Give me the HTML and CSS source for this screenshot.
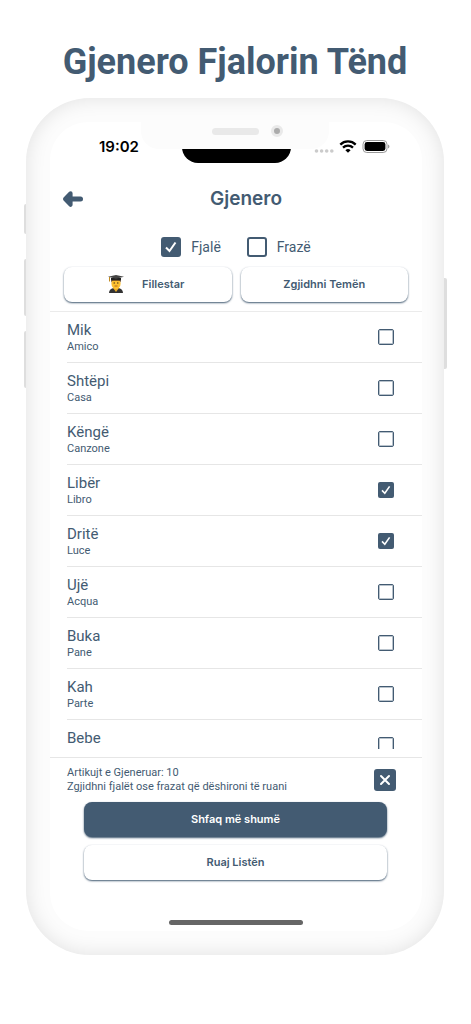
FILE: index.html
```html
<!DOCTYPE html>
<html lang="sq">
<head>
    <meta charset="UTF-8">
    <meta name="viewport" content="width=device-width, initial-scale=1.0">
    <title>Gjenero Fjalorin Tënd</title>
    <link rel="stylesheet" href="styles.css">
</head>
<body>
    <h1>Gjenero Fjalorin Tënd</h1>

    <div class="phone">
        <span class="side-key key-mute"></span>
        <span class="side-key key-up"></span>
        <span class="side-key key-down"></span>
        <span class="side-key key-power"></span>

        <div class="bezel-notch">
            <span class="speaker"></span>
            <span class="camera"></span>
        </div>

        <main class="screen">
            <div class="status-bar">
                <span class="clock">19:02</span>
                <span class="island"></span>
                <div class="status-icons">
                    <svg width="20" height="6" viewBox="0 0 20 6" fill="#cbcbcb">
                        <circle cx="2.5" cy="3" r="1.8"/>
                        <circle cx="7.6" cy="3" r="1.8"/>
                        <circle cx="12.7" cy="3" r="1.8"/>
                        <circle cx="17.8" cy="3" r="1.8"/>
                    </svg>
                    <svg class="wifi" width="18" height="13" viewBox="0 0 18 13" fill="none" stroke="#000" stroke-width="2.3">
                        <path d="M1.3 4.6a11 11 0 0 1 15.4 0"/>
                        <path d="M4 7.7a7.2 7.2 0 0 1 10 0"/>
                        <path d="M9 12.8 6.4 10.200a3.700 3.700 0 0 1 5.200 0z" fill="#000" stroke="none"/>
                    </svg>
                    <svg width="28" height="13" viewBox="0 0 28 13">
                        <rect x="1" y="0.5" width="24" height="12" rx="3.8" fill="#fff" stroke="#999"/>
                        <rect x="2.6" y="2.1" width="20.8" height="8.8" rx="2.4"/>
                        <path d="M26.2 4.6v4c1.6-.7 1.6-3.3 0-4z" fill="#888"/>
                    </svg>
                </div>
            </div>

            <header class="top-bar">
                <button class="back" type="button" aria-label="Kthehu">
                    <svg width="22" height="18" viewBox="0 0 22 18" fill="none" stroke="#435b72" stroke-linecap="round" stroke-linejoin="round">
                        <path d="M8.600 3.200 3 9l5.600 5.800z" fill="#435b72" stroke-width="4"/>
                        <path d="M5 9h13.500" stroke-width="5"/>
                    </svg>
                </button>
                <h2>Gjenero</h2>
            </header>

            <div class="kinds">
                <label><input class="check check-large" type="checkbox" checked>Fjalë</label>
                <label><input class="check check-large" type="checkbox">Frazë</label>
            </div>

            <div class="filters">
                <button class="btn btn-level" type="button">
                    <svg width="18" height="18" viewBox="0 0 18 18">
                        <path d="M2 18c0-3 2-4.500 5-5h4c3 .5 5 2 5 5z" fill="#333"/>
                        <path d="M6 13l3 4 3-4-1-2H7z" fill="#e9a825"/>
                        <ellipse cx="9" cy="8.500" rx="4.600" ry="5.500" fill="#fdc02f"/>
                        <path d="M4.300 7.500V4h9.400v3.500l-1-1.700H5.300z" fill="#5b3a20"/>
                        <path d="M4 3h10v2.500Q9 4 4 5.500z" fill="#222"/>
                        <path d="M9 0l8 1.700-8 2.100-8-2.100z" fill="#444"/>
                        <path d="M2.500 2v4.500" stroke="#c18a22"/>
                        <circle cx="7.200" cy="8" r=".7" fill="#46301a"/>
                        <circle cx="10.800" cy="8" r=".7" fill="#46301a"/>
                        <path d="M7.500 11h3" stroke="#a1501d" stroke-width=".8"/>
                    </svg>
                    <span>Fillestar</span>
                </button>
                <button class="btn" type="button">Zgjidhni Temën</button>
            </div>

            <ul class="words">
                <li><label><span class="word">Mik<small>Amico</small></span><input class="check" type="checkbox"></label></li>
                <li><label><span class="word">Shtëpi<small>Casa</small></span><input class="check" type="checkbox"></label></li>
                <li><label><span class="word">Këngë<small>Canzone</small></span><input class="check" type="checkbox"></label></li>
                <li><label><span class="word">Libër<small>Libro</small></span><input class="check" type="checkbox" checked></label></li>
                <li><label><span class="word">Dritë<small>Luce</small></span><input class="check" type="checkbox" checked></label></li>
                <li><label><span class="word">Ujë<small>Acqua</small></span><input class="check" type="checkbox"></label></li>
                <li><label><span class="word">Buka<small>Pane</small></span><input class="check" type="checkbox"></label></li>
                <li><label><span class="word">Kah<small>Parte</small></span><input class="check" type="checkbox"></label></li>
                <li class="cut"><label><span class="word">Bebe</span><input class="check" type="checkbox"></label></li>
            </ul>

            <footer class="summary">
                <div class="summary-row">
                    <p>Artikujt e Gjeneruar: 10<br>Zgjidhni fjalët ose frazat që dëshironi të ruani</p>
                    <button class="clear" type="button" aria-label="Pastro">
                        <svg width="12" height="12" viewBox="0 0 12 12" stroke="#fff" stroke-width="2" stroke-linecap="round">
                            <path d="M2 2l8 8M10 2l-8 8"/>
                        </svg>
                    </button>
                </div>
                <div class="actions">
                    <button class="btn btn-dark" type="button">Shfaq më shumë</button>
                    <button class="btn" type="button">Ruaj Listën</button>
                </div>
            </footer>

            <div class="home-bar"></div>
        </main>
    </div>
</body>
</html>
```

FILE: styles.css
```css
* {
    margin: 0;
    padding: 0;
    box-sizing: border-box;
}

body {
    font-family: Inter, 'Liberation Sans', sans-serif;
    background: #fff;
    color: #435b72;
    padding: 38px 27px 69px 26px;
}

h1 {
    font-family: Roboto, 'Liberation Sans', sans-serif;
    font-size: 36px;
    font-weight: 700;
    line-height: 48px;
    text-align: center;
    white-space: nowrap;
}

button {
    font: inherit;
    color: inherit;
    border: none;
    background: none;
    cursor: pointer;
}

svg {
    display: block;
}

/* phone frame */
.phone {
    position: relative;
    max-width: 418px;
    margin: 12px auto 0;
    padding: 24px 22px 24px 24px;
    border-radius: 64px;
    background: #fcfcfc;
    box-shadow: inset 0 0 20px rgba(0, 0, 0, 0.11);
}

.side-key {
    position: absolute;
    left: -2px;
    width: 2px;
    background: #dedede;
    border-radius: 2px 0 0 2px;
}

.key-mute { top: 106px; height: 30px; }
.key-up { top: 161px; height: 57px; }
.key-down { top: 233px; height: 57px; }

.key-power {
    left: auto;
    right: -3px;
    top: 180px;
    width: 3px;
    height: 91px;
    border-radius: 0 2px 2px 0;
}

.bezel-notch {
    position: absolute;
    z-index: 1;
    top: 24px;
    left: 50%;
    width: 188px;
    height: 27px;
    margin-left: -94px;
    background: #fcfcfc;
    border-radius: 0 0 18px 18px;
}

.speaker {
    position: absolute;
    top: 6px;
    left: 71px;
    width: 47px;
    height: 7px;
    border-radius: 4px;
    background: #e9e9e9;
}

.camera {
    position: absolute;
    top: 3px;
    left: 130px;
    width: 12px;
    height: 12px;
    border-radius: 50%;
    border: 3px solid #e9e9e9;
    background: #ababab;
}

.screen {
    display: flex;
    flex-direction: column;
    background: #fff;
    border-radius: 38px;
    overflow: hidden;
}

/* status bar */
.status-bar {
    display: flex;
    justify-content: space-between;
    height: 58px;
    padding: 0 32px 0 49px;
}

.clock {
    width: 60px;
    margin-top: 15px;
    font-size: 15px;
    font-weight: 600;
    line-height: 20px;
    color: #000;
}

.island {
    width: 109px;
    height: 41px;
    border-radius: 0 0 16px 16px;
    background: #000;
}

.status-icons {
    display: flex;
    gap: 5px;
    margin-top: 18px;
}

.status-icons svg:first-child {
    margin-top: 8px;
}

/* header */
.top-bar {
    display: grid;
    grid-template-columns: 40px 1fr 20px;
    align-items: center;
    height: 38px;
    padding: 0 12px;
}

h2 {
    font-size: 19px;
    font-weight: 600;
    line-height: 24px;
    text-align: center;
}

.kinds {
    display: flex;
    justify-content: center;
    gap: 26px;
    padding: 19px 0 10px;
}

.kinds label {
    display: flex;
    align-items: center;
    gap: 10px;
    font-family: Roboto, 'Liberation Sans', sans-serif;
    font-size: 14px;
    line-height: 20px;
}

.check {
    appearance: none;
    flex: none;
    width: 16px;
    height: 16px;
    border: 1px solid #435b72;
    box-shadow: inset 0 0 0 1px #b9c3cc;
    border-radius: 2px;
    background: #fff center / 100% no-repeat;
}

.check-large {
    width: 20px;
    height: 20px;
    border-width: 2px;
    border-radius: 3px;
    box-shadow: none;
}

.check:checked {
    border: none;
    box-shadow: none;
    background-color: #435b72;
    background-image: url("data:image/svg+xml,%3Csvg xmlns='http://www.w3.org/2000/svg' viewBox='0 0 20 20' fill='none' stroke='white' stroke-width='2'%3E%3Cpath d='M5 10.500l3.500 3.500 6-8.500'/%3E%3C/svg%3E");
}

/* buttons */
.btn {
    height: 35px;
    padding-bottom: 2px;
    border-radius: 8px;
    background: #fff;
    box-shadow: 0 1px 2px #435b72;
    font-size: 11px;
    font-weight: 600;
}

.btn-dark {
    background: #435b72;
    color: #fff;
}

.filters {
    display: grid;
    grid-template-columns: 1fr 1fr;
    gap: 9px;
    padding: 0 14px 9px;
}

.btn-level {
    display: flex;
    align-items: center;
    justify-content: center;
    gap: 17px;
    padding-right: 4px;
}

/* word list */
.words {
    list-style: none;
    padding-left: 17px;
    border-top: 1px solid #ebebeb;
    font-family: Roboto, 'Liberation Sans', sans-serif;
}

.words li {
    height: 51px;
    border-bottom: 1px solid #e6e6e6;
}

.words label {
    display: flex;
    justify-content: space-between;
    align-items: center;
    height: 50px;
    padding-right: 28px;
}

.word {
    font-size: 15px;
    line-height: 20px;
}

.word small {
    display: block;
    font-size: 11px;
    line-height: 14px;
}

.words .cut {
    height: 29px;
    overflow: hidden;
    border-bottom: none;
}

.cut .word {
    padding-bottom: 14px;
}

/* footer */
.summary {
    margin-top: 8px;
    padding: 8px 26px 0 17px;
    border-top: 1px solid #e6e6e6;
}

.summary-row {
    display: flex;
    justify-content: space-between;
    align-items: center;
}

.summary p {
    font-family: Roboto, 'Liberation Sans', sans-serif;
    font-size: 11px;
    line-height: 14px;
}

.clear {
    display: flex;
    align-items: center;
    justify-content: center;
    width: 22px;
    height: 22px;
    border-radius: 3px;
    background: #435b72;
}

.actions {
    display: grid;
    gap: 8px;
    padding: 8px 9px 0 17px;
}

.home-bar {
    width: 134px;
    height: 5px;
    margin: 40px auto 6px;
    border-radius: 3px;
    background: #666;
}
```
